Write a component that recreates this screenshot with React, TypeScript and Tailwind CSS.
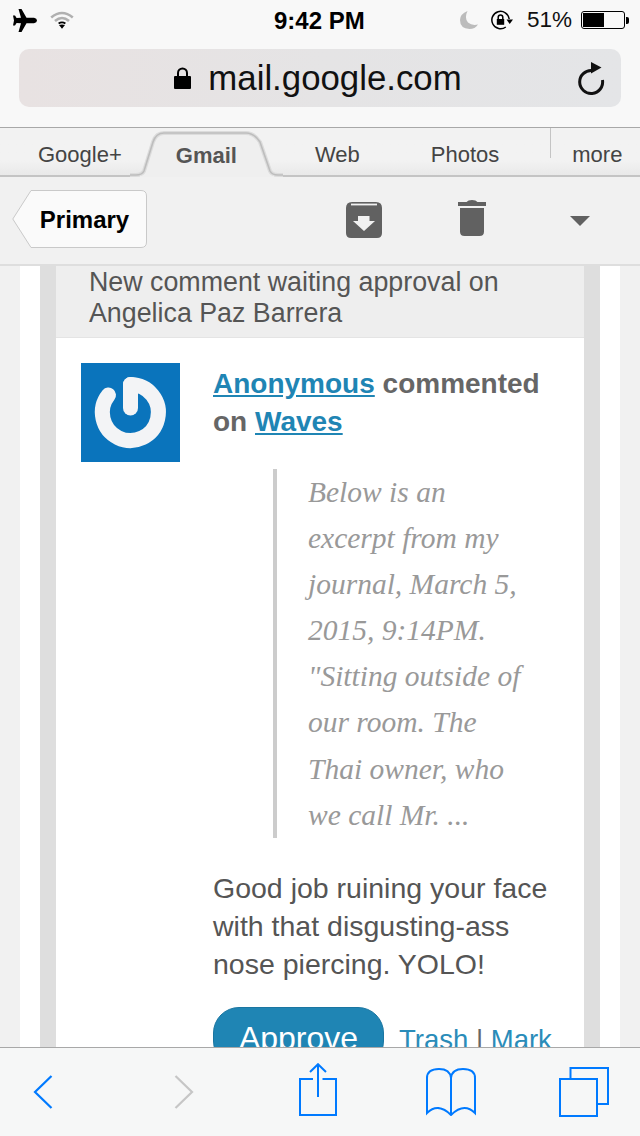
import React from "react";

const sans = "font-['Liberation_Sans',Arial,sans-serif]";

function Plane() {
  return (
    <svg width="24" height="23" viewBox="0 0 24 23" fill="#000">
      <path d="M5.5 0 L8.5 0 L13.5 8.8 L21 8.8 Q24 9.5 24 11.5 Q24 13.5 21 14.2 L13.5 14.2 L8.5 23 L5.5 23 L8 14.2 L3.6 14 L2 16.5 L0 16.5 L1 11.5 L0 6.5 L2 6.5 L3.6 9 L8 8.8 Z" />
    </svg>
  );
}

function Wifi() {
  return (
    <svg width="24" height="18" viewBox="0 0 24 18" fill="none">
      <path d="M1.2 6.5 Q12 -2.5 22.8 6.5" stroke="#b0b0b0" strokeWidth="2.6" />
      <path d="M5 10 Q12 4 19 10" stroke="#b0b0b0" strokeWidth="2.6" />
      <path d="M8.6 12.6 Q12 10.2 15.4 12.6" stroke="#000" strokeWidth="1.8" />
      <path d="M9 14 L12 17.8 L15 14 Q12 12.8 9 14 Z" fill="#000" />
    </svg>
  );
}

function Moon() {
  return (
    <svg width="18" height="18" viewBox="0 0 18 18" fill="#bcbcbc">
      <path d="M7.5 0 Q4 7 8 11.5 Q12 15 18 13.5 Q15 18 9.5 18 Q0 17.5 0 9 Q0 3 7.5 0 Z" />
    </svg>
  );
}

function RotationLock() {
  return (
    <svg width="22" height="20" viewBox="0 0 22 20" fill="none" stroke="#000" strokeWidth="1.5">
      <path d="M18.2 9 A8.7 8.7 0 1 0 14.8 17" />
      <path d="M15.5 9.5 L22 9.5 L18.7 14 Z" fill="#000" stroke="none" />
      <rect x="5.8" y="9" width="7.4" height="5.8" fill="#000" stroke="none" />
      <path d="M7.2 9.5 V7.2 A2.3 2.3 0 0 1 11.8 7.2 V9.5" />
    </svg>
  );
}

function Battery() {
  return (
    <div className="flex items-center">
      <div className="w-[44px] h-[18px] border border-black rounded-[3px] p-[1px] flex">
        <div className="w-[21px] bg-black" />
      </div>
      <div className="w-[3px] h-[7px] bg-black rounded-r-[2px] ml-[1px]" />
    </div>
  );
}

function Lock() {
  return (
    <svg width="17" height="22" viewBox="0 0 17 22">
      <rect x="0" y="9" width="17" height="13" rx="1" fill="#000" />
      <path d="M4 10 V6 A4.5 4.5 0 0 1 13 6 V10" fill="none" stroke="#000" strokeWidth="2" />
    </svg>
  );
}

function Reload() {
  return (
    <svg width="28" height="36" viewBox="0 0 28 36" fill="none">
      <path d="M15 10.5 A11.5 11.5 0 1 0 25.5 20" stroke="#111" strokeWidth="3" />
      <path d="M14 2 L24.5 7.5 L14 13.5 Z" fill="#111" />
    </svg>
  );
}

function Archive() {
  return (
    <svg width="36" height="36" viewBox="0 0 36 36" className="block">
      <path d="M6 0 H30 Q36 0 36 6 V31 Q36 36 31 36 H5 Q0 36 0 31 V6 Q0 0 6 0 Z" fill="#616161" />
      <rect x="5" y="1.6" width="26" height="1.8" fill="#f1f1f1" />
      <path d="M12 14 H23.5 V19 H29 L18 29 L7 19 H12 Z" fill="#f1f1f1" />
    </svg>
  );
}

function Trash() {
  return (
    <svg width="28" height="36" viewBox="0 0 28 36" fill="#616161" className="block">
      <path d="M8.5 2 Q10 0 14 0 Q18 0 19.5 2 H28 V6 H0 V2 Z" />
      <path d="M2 8 H26 V31.5 Q26 36 21.5 36 H6.5 Q2 36 2 31.5 Z" />
    </svg>
  );
}

function Back() {
  return (
    <svg width="20" height="34" viewBox="0 0 20 34" fill="none" stroke="#007aff" strokeWidth="2.2" className="block">
      <path d="M18.5 1 L2 17 L18.5 33" />
    </svg>
  );
}

function Forward() {
  return (
    <svg width="20" height="34" viewBox="0 0 20 34" fill="none" stroke="#c6c6c6" strokeWidth="2.2" className="block">
      <path d="M1.5 1 L18 17 L1.5 33" />
    </svg>
  );
}

function Share() {
  return (
    <svg width="38" height="53" viewBox="0 0 38 53" fill="none" stroke="#007aff" strokeWidth="2" className="block">
      <path d="M14 16 H1 V52 H37 V16 H23.5" />
      <path d="M19 1 V34" />
      <path d="M11 9 L19 1.2 L27 9" />
    </svg>
  );
}

function Book() {
  return (
    <svg width="50" height="48" viewBox="0 0 50 48" fill="none" stroke="#007aff" strokeWidth="2" className="block">
      <path d="M25 10 Q24 1 13 1 Q1 1 1 10 V45 Q12 34 25 47 Q38 34 49 45 V10 Q49 1 37 1 Q26 1 25 10 Z" />
      <path d="M25 10 V47" />
    </svg>
  );
}

function TabsIcon() {
  return (
    <svg width="50" height="50" viewBox="0 0 50 50" fill="none" stroke="#007aff" strokeWidth="2" className="block">
      <path d="M11.5 11 V1 H49 V37 H39" />
      <rect x="1" y="12" width="37" height="37" />
    </svg>
  );
}

function GravatarLogo() {
  return (
    <svg width="99" height="99" viewBox="0 0 99 99" className="block">
      <rect width="99" height="99" fill="#0a74bc" />
      <g className="blur-[0.5px]" fill="none" stroke="#f3f4f6" strokeWidth="15" strokeLinecap="round">
        <path d="M27.5 32 A28 28 0 1 0 49.5 21.5" />
        <path d="M49.5 21.5 V45" />
      </g>
    </svg>
  );
}

function TabShape() {
  const edge = "M0 47 H6 Q12 47 14 43 L23 14 Q26 5 34 5 H116 Q124 5 130 14 L140 43 Q142 47 148 47 H153";
  return (
    <svg width="153" height="49" viewBox="0 0 153 49" className="absolute left-[130px] top-0 block">
      <path d={`${edge} V49 H0 Z`} fill="#efefef" />
      <path d={edge} fill="none" stroke="#dcdcdc" strokeWidth="4" />
      <path d={edge} fill="none" stroke="#bdbdbd" strokeWidth="1.6" />
      <path d="M10 47.8 H144 V49 H10 Z" fill="#efefef" />
    </svg>
  );
}

export default function App() {
  return (
    <div className={`relative w-[640px] h-[1136px] overflow-hidden flex flex-col bg-[#f1f1f1] ${sans}`}>
      {/* Browser chrome */}
      <header className="h-[128px] shrink-0 bg-[#f8f8f8] border-b border-[#a8a8a8] pl-[13px] pr-[11px] flex flex-col">
        <div className="h-[40px] flex items-center justify-between relative">
          <div className="flex items-center gap-[13px]">
            <Plane />
            <Wifi />
          </div>
          <div className="absolute left-[261px] top-[6px] text-[24px] leading-[30px] font-bold text-black">
            9:42 PM
          </div>
          <div className="flex items-center">
            <Moon />
            <div className="w-[13px]" />
            <RotationLock />
            <span className="text-[22.5px] ml-[14px] mr-[9px] text-[#111]">51%</span>
            <Battery />
          </div>
        </div>
        <div className="mt-[9px] ml-[6px] mr-[8px] h-[58px] rounded-[10px] bg-gradient-to-r from-[#e8e2e2] via-[#e5e4e5] to-[#e4e5e7] flex items-center relative">
          <div className="flex-1 flex items-center justify-center gap-[17px] pr-[4px]">
            <Lock />
            <span className="text-[34.8px] text-[#111]">mail.google.com</span>
          </div>
          <div className="absolute right-[16px] top-[11px]">
            <Reload />
          </div>
        </div>
      </header>

      {/* Tabs */}
      <nav className="h-[49px] shrink-0 relative bg-gradient-to-b from-[#f2f2f2] from-70% to-[#e9e9e9] border-b-2 border-[#c4c4c4] text-[22px] text-[#444]">
        <TabShape />
        <div className="relative flex h-full items-center pt-[6px]">
          <span className="ml-[38px]">Google+</span>
          <span className="ml-[54px] font-bold text-[#555] translate-y-[1px]">Gmail</span>
          <span className="ml-[78px]">Web</span>
          <span className="ml-[71px]">Photos</span>
          <span className="ml-[73px]">more</span>
        </div>
        <div className="absolute left-[550px] top-0 w-px h-[30px] bg-[#c4c4c4]" />
      </nav>

      {/* Action bar */}
      <div className="h-[89px] shrink-0 bg-[#f1f1f1] border-b-2 border-[#dedede] flex items-start">
        <div className="ml-[12px] mt-[13px] w-[135px] h-[58px] relative flex items-center justify-center">
          <svg width="135" height="58" viewBox="0 0 135 58" className="absolute inset-0">
            <path d="M19 0.5 H129 Q134.5 0.5 134.5 6 V52 Q134.5 57.5 129 57.5 H19 L0.8 29 Z" fill="#fafafa" stroke="#c9c9c9" />
          </svg>
          <span className="relative text-[24px] font-bold text-black pl-[10px] translate-y-[1px]">Primary</span>
        </div>
        <div className="ml-[199px] mt-[25px]">
          <Archive />
        </div>
        <div className="ml-[76px] mt-[23px]">
          <Trash />
        </div>
        <div className="ml-[84px] mt-[39px] w-0 h-0 border-l-[10px] border-r-[10px] border-t-[10px] border-l-transparent border-r-transparent border-t-[#616161]" />
      </div>

      {/* Mail body */}
      <main className="flex-1 min-h-0 overflow-hidden bg-[#f1f1f1] px-[20px]">
        <div className="bg-white h-full px-[20px]">
          <div className="bg-[#dedede] h-full px-[16px]">
            <div className="h-full bg-white">
              <div className="h-[72px] bg-[#eeeeee] border-b border-[#e4e4e4] pl-[33px] text-[26.8px] leading-[31px] text-[#555] pt-[1px] whitespace-nowrap">
                New comment waiting approval on
                <br />
                Angelica Paz Barrera
              </div>
              <div className="flex pl-[25px] pt-[25px]">
                <div className="shrink-0 w-[99px] h-[99px]">
                  <GravatarLogo />
                </div>
                <div className="ml-[33px] flex-1 min-w-0">
                  <p className="mt-[2px] text-[28px] leading-[38px] font-bold text-[#666] whitespace-nowrap">
                    <a className="text-[#1f85b4] underline">Anonymous</a> commented
                    <br />
                    on <a className="text-[#1f85b4] underline">Waves</a>
                  </p>
                </div>
              </div>
              <div className="pl-[217px] pr-[20px] pt-[7px]">
                <blockquote className="border-l-4 border-[#cccccc] pl-[31px] font-['Liberation_Serif','Times_New_Roman',serif] italic text-[29.5px] leading-[46.1px] text-[#999] whitespace-nowrap">
                  Below is an
                  <br />
                  excerpt from my
                  <br />
                  journal, March 5,
                  <br />
                  2015, 9:14PM.
                  <br />
                  "Sitting outside of
                  <br />
                  our room. The
                  <br />
                  Thai owner, who
                  <br />
                  we call Mr. ...
                </blockquote>
              </div>
              <p className="pl-[157px] pt-[31px] text-[28.5px] leading-[38px] text-[#555] whitespace-nowrap">
                Good job ruining your face
                <br />
                with that disgusting-ass
                <br />
                nose piercing. YOLO!
              </p>
              <div className="pl-[157px] pt-[24px] flex items-start">
                <div className="w-[171px] h-[60px] rounded-[26px] bg-[#1f85b4] border border-[#1b76a1] text-white text-[32px] leading-[60px] text-center">
                  Approve
                </div>
                <div className="ml-[15px] pt-[17px] text-[27.5px] leading-[32px] text-[#2a8cb9] whitespace-nowrap">
                  Trash <span className="text-[#666]">|</span> Mark
                </div>
              </div>
            </div>
          </div>
        </div>
      </main>

      {/* Safari bottom toolbar, floating above the page */}
      <footer className="absolute left-0 right-0 bottom-0 h-[89px] bg-[#f6f7f7] border-t border-[#a8a8a8]">
        <div className="absolute left-[33px] top-[27px]"><Back /></div>
        <div className="absolute left-[174px] top-[27px]"><Forward /></div>
        <div className="absolute left-[299px] top-[15px]"><Share /></div>
        <div className="absolute left-[426px] top-[20px]"><Book /></div>
        <div className="absolute left-[559px] top-[19px]"><TabsIcon /></div>
      </footer>
    </div>
  );
}
